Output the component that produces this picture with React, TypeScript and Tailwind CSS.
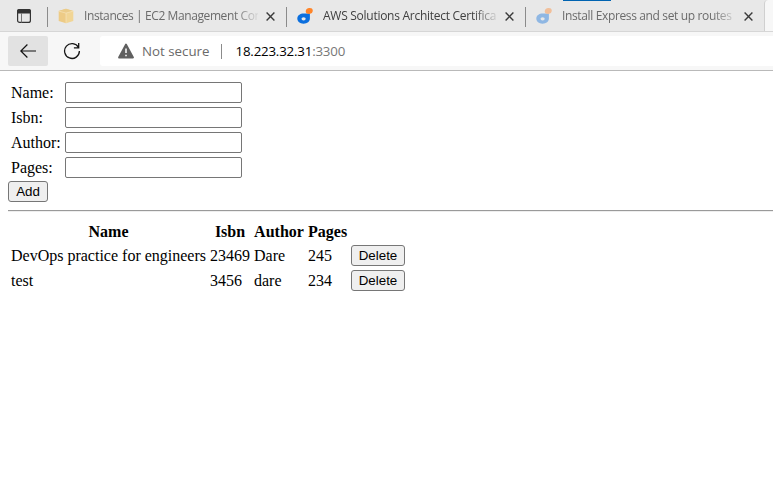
import React from "react";

function BoxIcon() {
  return (
    <svg width="16" height="16" viewBox="0 0 16 16" className="shrink-0">
      <path d="M.7 3 8 .8v14.400L.7 13z" fill="#edcb86" />
      <path d="M8 .8 15.300 3v10L8 15.200z" fill="#f1d595" />
      <path d="M.7 3 8 .8 15.300 3 8 5z" fill="#ebcc8a" />
      <path d="M8 5v10.200M.7 3.100l7.300 2 7.300-2" stroke="#f6e4bb" strokeWidth=".7" fill="none" />
    </svg>
  );
}

function DropIcon({ faded }: { faded?: boolean }) {
  return (
    <svg width="16" height="16" viewBox="0 0 16 16" className={faded ? "shrink-0 opacity-40" : "shrink-0"}>
      <path d="M12.900 5.300v5.200c0 3-2.700 5.200-6.400 5.200C2.900 15.700.300 13.600.300 10.600.300 7.500 3 5.500 6.800 5.500c2.600 0 4.400 0 6.100-.2z" fill="#0b6fde" />
      <ellipse cx="6.600" cy="10.800" rx="2.100" ry="1.600" fill="#e8e8e8" />
      <path d="M12.300.100c1.800-.2 3.500.500 3.500 2.500 0 2-1.300 3.300-3.400 3.300-2.200 0-3.700-.8-3.700-2.500 0-1.900 1.600-3.100 3.600-3.300z" fill="#ff8428" />
    </svg>
  );
}

function Close() {
  return (
    <svg width="9" height="9" viewBox="0 0 9 9" className="shrink-0">
      <path d="M.6.6l7.800 7.800M8.400.6L.6 8.400" stroke="#3b3b3b" strokeWidth="1.400" />
    </svg>
  );
}

type TabProps = { icon: React.ReactNode; title: string; textClass: string };

function Tab({ icon, title, textClass }: TabProps) {
  return (
    <div className="flex h-full w-[239px] shrink-0 items-center">
      <div className="h-[20px] w-px shrink-0 translate-y-px bg-[#8b8b8b]" />
      <div className="ml-[10px] flex">{icon}</div>
      <div className={`ml-[10px] w-[174px] shrink-0 whitespace-nowrap text-[12px] leading-[18px] [mask-image:linear-gradient(to_right,black_150px,transparent_177px)] ${textClass}`}>
        {title}
      </div>
      <div className="ml-[8px] flex translate-y-px">
        <Close />
      </div>
    </div>
  );
}

function Button({ children, width }: { children: string; width: string }) {
  return (
    <button className={`flex h-[21px] items-center justify-center rounded-[3px] border border-[#767676] bg-[#efefef] font-['Liberation_Sans',Arial,sans-serif] text-[13.333px] leading-[15px] text-black ${width}`}>
      {children}
    </button>
  );
}

const fields = ["Name:", "Isbn:", "Author:", "Pages:"];
const books = [
  ["DevOps practice for engineers", "23469", "Dare", "245"],
  ["test", "3456", "dare", "234"],
];
const columns = "grid grid-cols-[195px_40px_50px_39px_54px] items-center gap-x-[4px] pl-[3px]";

export default function App() {
  return (
    <div className="h-[485px] w-[773px] overflow-hidden bg-white">
      <div className="relative flex h-8 items-center overflow-hidden border-b border-[#d6d6d6] bg-[#e8e8e8] font-['Open_Sans','Noto_Sans',sans-serif]">
        <svg width="14" height="14" viewBox="0 0 14 14" className="ml-[17px] mr-4 shrink-0">
          <rect x=".6" y=".6" width="12.800" height="12.800" rx="2" fill="none" stroke="#333" strokeWidth="1.200" />
          <path d="M0 4.500V2Q0 0 2 0h10q2 0 2 2v2.500z" fill="#333" />
          <path d="M4.500 4v9.500" stroke="#777" strokeWidth="1" />
        </svg>
        <Tab icon={<BoxIcon />} title="Instances | EC2 Management Con" textClass="text-[#6b6b6b] tracking-[-0.4px]" />
        <Tab icon={<DropIcon />} title="AWS Solutions Architect Certifica" textClass="text-[#404040] tracking-[-0.27px]" />
        <Tab icon={<DropIcon faded />} title="Install Express and set up routes" textClass="text-[#6b6b6b] tracking-[-0.36px]" />
        <div className="absolute left-[563px] top-0 h-px w-[48px] bg-[#0063b1]" />
        <div className="absolute right-0 top-0 h-8 w-[9px] rounded-tl border-l border-[#d0d0d0] bg-[#f7f7f7]" />
      </div>

      <div className="flex h-[39px] items-center border-b border-[#b9b9b9] bg-[#f7f7f7] pl-2 font-['Open_Sans','Noto_Sans',sans-serif]">
        <div className="flex h-[30px] w-[40px] shrink-0 items-center justify-center rounded-[2px] bg-[#e2e2e2]">
          <svg width="16" height="14" viewBox="0 0 16 14">
            <path d="M16 7H.8M7.400.5L.8 7l6.600 6.500" fill="none" stroke="#111" strokeWidth="1.200" />
          </svg>
        </div>
        <svg width="18" height="18" viewBox="0 0 18 18" className="ml-[15px] shrink-0">
          <path d="M15.500 5.500A7.400 7.400 0 1 0 16.400 9M15.700 1v4.800h-4.800" fill="none" stroke="#151515" strokeWidth="1.300" />
        </svg>
        <div className="ml-[19px] flex h-[30px] flex-1 items-center rounded-l-[3px] bg-white pl-[18px] text-[13.3px]">
          <svg width="16" height="16" viewBox="0 0 16 16" className="shrink-0">
            <path d="M8 1.500L15 14.500H1z" fill="#606060" stroke="#606060" strokeWidth="1.800" strokeLinejoin="round" />
            <path d="M8 5.500v4.500M8 11.700v1.500" stroke="#fff" strokeWidth="1.500" />
          </svg>
          <span className="ml-2 w-[68px] shrink-0 whitespace-nowrap pt-px text-[#6a6a6a]">Not secure</span>
          <span className="ml-[11px] h-[15px] w-px shrink-0 bg-[#8b8b8b]" />
          <span className="ml-[13.5px] whitespace-nowrap pt-px tracking-[-0.19px] text-black">
            18.223.32.31<span className="text-[#777]">:3300</span>
          </span>
        </div>
      </div>

      <main className="pl-2 pt-[11px] font-['Liberation_Serif','Times_New_Roman',serif] text-[16px] leading-[18px] text-black">
        <form className="flex flex-col gap-1" onSubmit={(event) => event.preventDefault()}>
          {fields.map((field) => (
            <label key={field} className="flex h-[21px] items-center pl-[3px]">
              <span className="mt-px w-[54px] whitespace-nowrap">{field}</span>
              <input className="h-[21px] w-[177px] rounded-[2px] border border-[#767676] bg-white px-0.5" />
            </label>
          ))}
          <div className="-mt-px">
            <Button width="w-[40px]">Add</Button>
          </div>
        </form>
        <hr className="mt-2 h-[2px] border-b border-t border-b-[#eeeeee] border-t-[#9a9a9a]" />
        <section className="pt-[10px]">
          <div className={`${columns} h-5 text-center font-bold`}>
            <span>Name</span>
            <span>Isbn</span>
            <span>Author</span>
            <span>Pages</span>
          </div>
          <div className="mt-[3px] flex flex-col gap-1">
            {books.map((book) => (
              <div key={book[0]} className={`${columns} h-[21px]`}>
                {book.map((value) => (
                  <span key={value} className="mt-px whitespace-nowrap">{value}</span>
                ))}
                <Button width="w-[54px]">Delete</Button>
              </div>
            ))}
          </div>
        </section>
      </main>
    </div>
  );
}
